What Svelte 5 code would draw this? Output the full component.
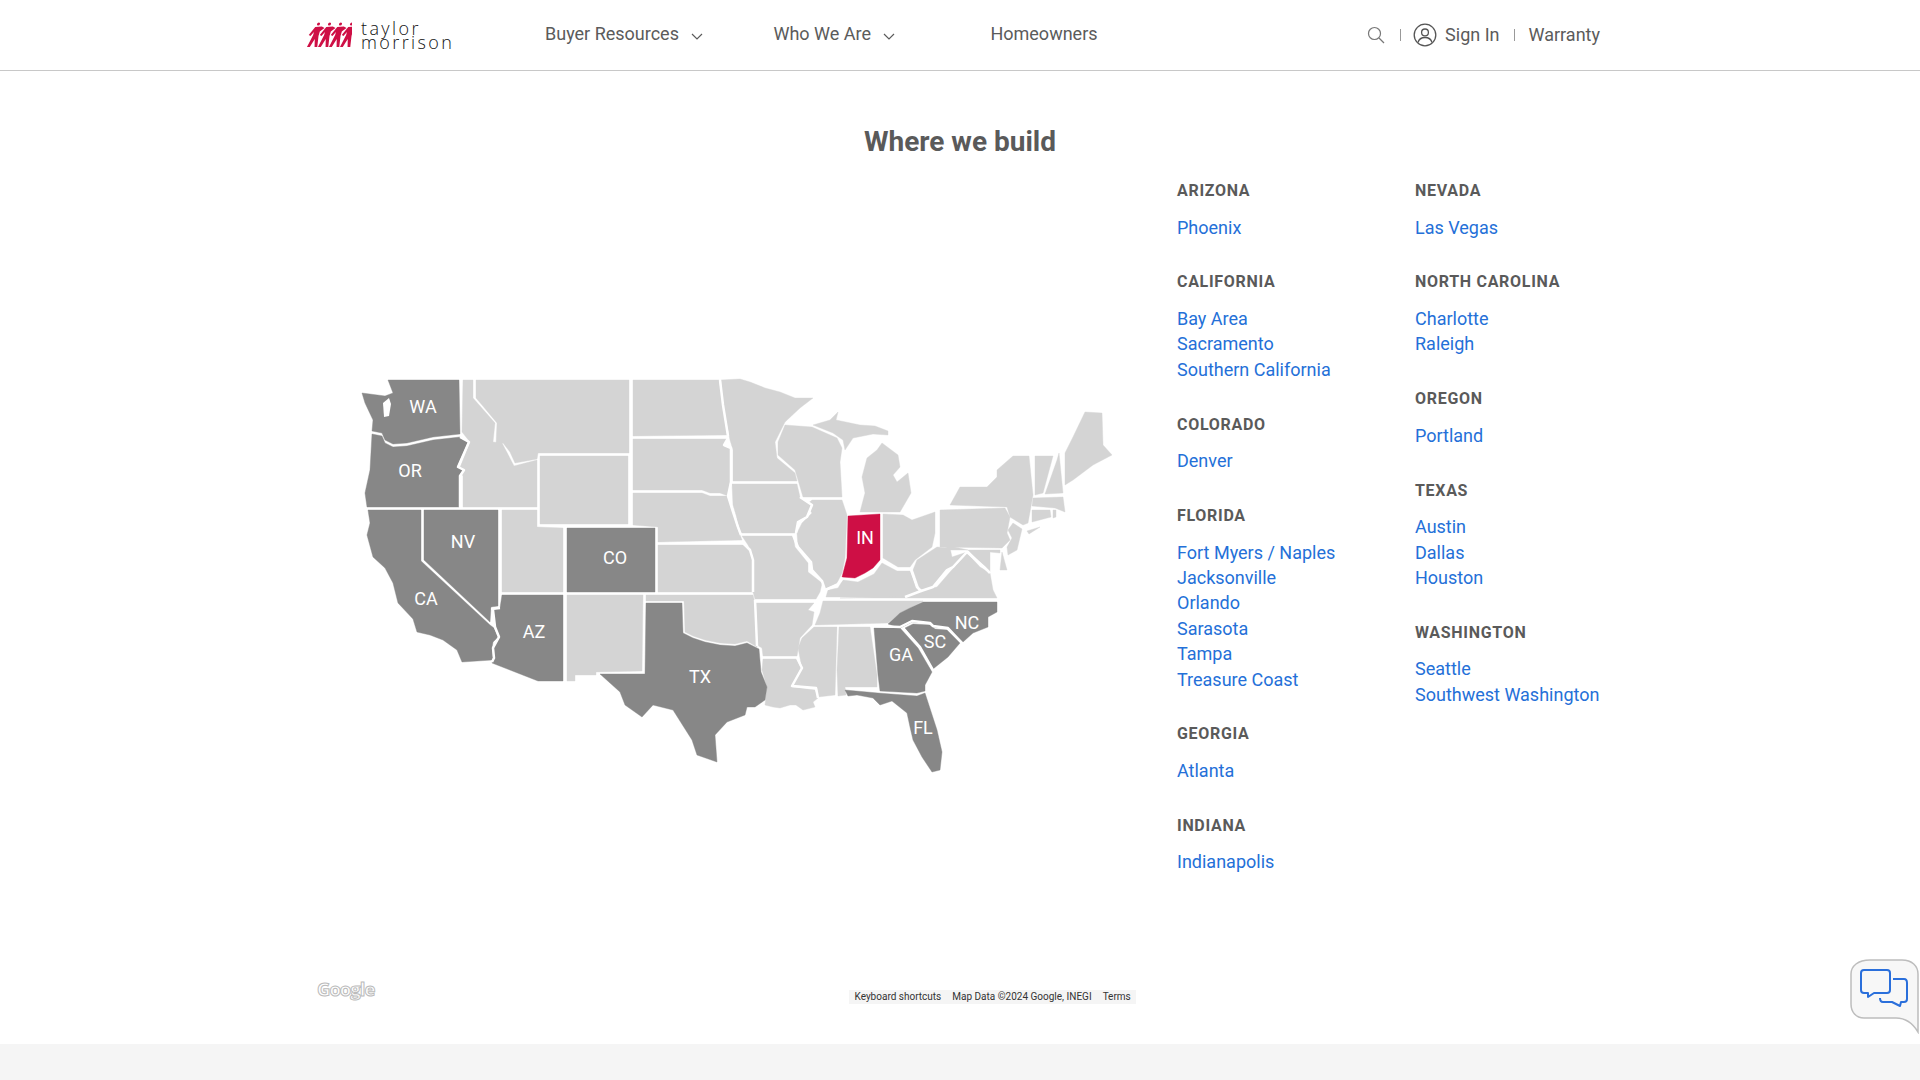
<script>
  const DARK = '#878787'
  const LIGHT = '#d4d4d4'
  const RED = '#ce0f45'

  const states = [
    ['MT', '476,380 629,380 629,453 538,453 537,459 515,463 510,452 503,443 496,445 497,423 482,405 476,398'],
    ['ID', '463,380 473,380 473,398 495,423 493,442 502,443 514,466 537,460 537,507 463,507 463,476 459,470 470,442 462,432'],
    ['ND', '633,380 719,380 723,405 727,435 633,436'],
    ['SD', '633,439 727,439 724,445 730,448 730,482 728,496 720,493 710,493 702,490 633,490'],
    ['NE', '633,493 702,493 710,496 727,496 733,512 737,527 742,540 658,542 658,527 633,525'],
    ['WY', '540,456 628,456 628,524 540,524'],
    ['UT', '502,510 537,510 537,527 563,528 563,592 502,592'],
    ['KS', '658,545 743,545 750,550 753,560 753,592 658,592'],
    ['NM', '567,595 643,595 642,671 596,672 596,675 575,675 575,681 567,681'],
    ['OK', '646,595 753,595 755,603 757,647 747,641 735,644 720,643 705,640 693,636 685,632 684,601 646,601'],
    ['MN', '721,380 740,379 750,382 765,388 780,392 795,398 813,398 800,408 785,422 775,442 777,458 795,473 797,481 733,481 733,450 730,440 725,415 722,395'],
    ['IA', '732,484 797,484 800,497 812,505 807,517 798,522 795,533 740,533 736,515 733,505'],
    ['MO', '742,536 793,536 795,547 808,563 808,572 822,583 820,592 816,599 755,599 753,592 753,557 748,545'],
    ['AR', '756,603 814,603 808,610 814,612 812,625 800,638 797,656 763,656 762,648 757,645'],
    ['LA', '763,659 797,659 801,668 791,687 815,690 818,698 813,702 815,707 803,710 796,705 790,705 780,708 773,707 765,705 767,687 762,670'],
    ['IL', '812,500 842,500 847,515 845,558 842,573 837,583 825,589 822,580 812,570 811,562 798,547 797,533 802,523 812,513 806,505'],
    ['WI', '785,425 812,427 837,438 842,448 840,462 842,497 803,497 798,480 795,470 778,455 778,442'],
    ['MIU', '813,425 830,420 838,412 836,420 860,425 875,426 888,431 888,435 873,434 853,438 845,450 843,440 833,433'],
    ['MI', '882,443 898,455 900,467 893,475 897,482 908,473 911,493 900,512 860,512 865,493 862,477 867,458 877,450'],
    ['OH', '883,514 903,515 912,520 935,512 935,533 932,547 915,560 910,567 898,567 883,558'],
    ['KY', '826,597 828,590 838,588 843,580 858,582 874,574 882,563 897,571 910,571 916,586 921,590 905,597'],
    ['TN', '823,601 923,601 910,608 900,613 888,623 815,625 820,613'],
    ['WV', '913,570 917,560 937,547 950,548 952,557 967,552 953,567 947,570 933,587 920,590'],
    ['VA', '840,598 907,596 922,590 937,587 950,572 967,553 980,567 990,573 993,590 997,598'],
    ['MS', '814,627 837,627 835,695 818,697 817,688 793,685 802,668 798,648 802,638'],
    ['AL', '839,627 870,627 877,675 877,687 845,687 846,695 838,696 837,670'],
    ['PA', '940,510 1005,508 1010,517 1007,533 1010,540 1002,548 940,547'],
    ['NY', '950,505 960,487 987,487 997,477 997,470 1013,456 1029,456 1033,495 1028,523 1023,525 1010,517 1007,507'],
    ['LI', '1027,531 1040,527 1029,534'],
    ['NJ', '1013,523 1022,529 1017,550 1008,555 1007,547 1012,538 1008,530'],
    ['MD', '940,550 1000,550 1000,553 990,552 990,572 984,566 968,550 950,546'],
    ['DE', '1002,552 1007,570 1000,570'],
    ['VT', '1035,456 1053,456 1043,493 1035,495'],
    ['NH', '1059,453 1063,493 1045,494 1057,460'],
    ['ME', '1065,453 1073,437 1085,412 1102,413 1103,445 1112,455 1093,465 1073,480 1065,485'],
    ['MA', '1033,498 1063,497 1065,512 1055,508 1032,506'],
    ['CT', '1032,510 1050,510 1051,517 1032,522'],
    ['RI', '1053,510 1056,510 1056,517 1053,518'],
  ].map(([id, points]) => ({ id, points, fill: LIGHT }))

  const active = [
    ['WA', '388,380 459,380 460,434 433,437 407,443 393,444 385,440 382,433 372,431 373,420 365,403 362,393 385,396 393,393'],
    ['OR', '372,434 382,436 385,443 393,447 407,446 433,440 460,437 468,442 457,467 463,470 459,476 459,507 367,507 365,493 370,470'],
    ['NV', '424,510 498,510 498,606 491,607 490,622 424,560'],
    ['CA', '368,510 421,510 421,561 490,625 494,628 498,637 493,642 492,648 493,658 492,660 462,662 457,650 443,640 430,635 417,632 413,619 398,603 393,583 385,568 373,557 367,535 370,523'],
    ['CO', '567,528 655,528 655,592 567,592'],
    ['AZ', '502,595 563,595 563,681 538,681 492,663 494,658 493,648 500,637 495,627 493,610 500,608'],
    ['TX', '646,603 682,603 683,633 693,638 705,642 720,645 735,646 747,643 759,649 761,672 767,687 765,700 755,707 747,707 745,715 727,722 715,735 717,762 697,755 692,740 673,710 653,705 642,717 625,705 620,692 600,674 645,674'],
    ['NC', '923,602 997,602 997,612 988,617 988,627 973,633 963,642 948,628 933,627 930,623 912,622 900,628 888,624 900,613 910,608'],
    ['SC', '905,628 913,624 930,625 935,629 947,630 960,643 948,657 933,669 920,647'],
    ['GA', '874,628 900,628 918,648 932,672 925,685 925,691 917,693 880,691 878,675'],
    ['FL', '845,690 878,693 917,696 925,693 937,730 942,752 940,770 932,772 922,757 913,740 910,727 907,713 892,701 880,705 873,698 857,695 848,696'],
  ].map(([id, points]) => ({ id, points, fill: DARK }))

  const indiana = { id: 'IN', points: '848,516 880,514 880,560 873,568 865,573 855,578 842,577 847,558', fill: RED }

  // borders between states whose polygons touch
  const borders = [
    '720,380 723,405 728,436',
    '728,438 724,445 731,448 731,482 728,496 733,512 738,527 741,535',
    '743,543 750,550 753,560 753,592',
    '755,600 756,622 757,646',
    '793,535 798,547 811,562 812,570 822,581 825,590 837,585 843,578',
    '800,497 812,505 807,517 798,522 796,533',
    '911,569 917,587 921,591 905,597',
    '921,591 933,587 947,570 953,567 967,552 984,567 990,573',
    '797,658 802,668 792,686 816,688 818,698',
    '460,437 469,442 458,467 464,470 460,476 460,507',
    '491,609 500,608',
    '493,610 495,627 499,637 493,648 494,658 492,662',
    '874,626 900,627 912,621 930,623 933,626 948,628 962,643',
    '903,628 920,647 933,670',
  ]

  const labels = [
    ['WA', 423, 406], ['OR', 410, 470], ['NV', 463, 541], ['CO', 615, 557],
    ['CA', 426, 598], ['AZ', 534, 631], ['TX', 700, 676], ['IN', 865, 537],
    ['NC', 967, 622], ['SC', 935, 641], ['GA', 901, 654], ['FL', 923, 727],
  ]

  const columns = [
    [
      { name: 'Arizona', cities: ['Phoenix'] },
      { name: 'California', cities: ['Bay Area', 'Sacramento', 'Southern California'] },
      { name: 'Colorado', cities: ['Denver'] },
      { name: 'Florida', cities: ['Fort Myers / Naples', 'Jacksonville', 'Orlando', 'Sarasota', 'Tampa', 'Treasure Coast'] },
      { name: 'Georgia', cities: ['Atlanta'] },
      { name: 'Indiana', cities: ['Indianapolis'] },
    ],
    [
      { name: 'Nevada', cities: ['Las Vegas'] },
      { name: 'North Carolina', cities: ['Charlotte', 'Raleigh'] },
      { name: 'Oregon', cities: ['Portland'] },
      { name: 'Texas', cities: ['Austin', 'Dallas', 'Houston'] },
      { name: 'Washington', cities: ['Seattle', 'Southwest Washington'] },
    ],
  ]
</script>

<header class="header">
  <div class="header-inner">
    <a class="logo" href="#top">
      <svg class="logo-mark" viewBox="0 0 46 26" width="46" height="26" aria-hidden="true">
        {#each [0, 11, 22, 33] as dx}
          <g transform="translate({dx} 0) skewX(-14) translate(6 0)" fill={RED}>
            <circle cx="7" cy="2" r="1.5" />
            <path d="M0 13 L4.500 5 L11 4.600 L14 6 L10.200 9.500 L10 14 L11.500 25 L8.800 25 L7 17 L4 25 L1.200 25 L4.400 13 L4.400 10 L2 14 Z" />
          </g>
        {/each}
      </svg>
      <span class="logo-text">taylor morrison</span>
    </a>
    <nav class="nav">
      <a class="nav-link buyer" href="#top">Buyer Resources
        <svg class="chev" viewBox="0 0 12 7" width="12" height="7"><path d="M1 1l5 5 5-5" /></svg>
      </a>
      <a class="nav-link who" href="#top">Who We Are
        <svg class="chev" viewBox="0 0 12 7" width="12" height="7"><path d="M1 1l5 5 5-5" /></svg>
      </a>
      <a class="nav-link" href="#top">Homeowners</a>
    </nav>
    <div class="tools">
      <svg class="search" viewBox="0 0 18 18" width="18" height="18">
        <circle cx="7.5" cy="7.5" r="6" /><path d="M12 12l5 5" />
      </svg>
      <span class="sep first"></span>
      <svg class="user" viewBox="0 0 24 24" width="24" height="24">
        <circle cx="12" cy="12" r="10.8" /><circle cx="12" cy="9.4" r="3.4" />
        <path d="M5 19.5c1-3.6 3.4-5 7-5s6 1.400 7 5" />
      </svg>
      <a class="nav-link" href="#top">Sign In</a>
      <span class="sep"></span>
      <a class="nav-link" href="#top">Warranty</a>
    </div>
  </div>
</header>

<main class="main">
  <h1 class="title">Where we build</h1>
  <div class="row">
    <div class="map">
      <svg viewBox="300 170 850 850" width="850" height="850">
        {#each [...states, ...active, indiana] as s (s.id)}
          <polygon points={s.points} fill={s.fill} stroke={s.fill} stroke-width="0.4" stroke-linejoin="round" />
        {/each}
        {#each borders as b}
          <polyline points={b} fill="none" stroke="#fff" stroke-width="2.5" stroke-linejoin="round" />
        {/each}
        <path d="M383 403 L389 398 L391 404 L389 416 L384 417 Z" fill="#fff" />
        {#each labels as [text, x, y]}
          <text {x} {y} text-anchor="middle" dominant-baseline="central">{text}</text>
        {/each}
      </svg>
      <span class="google">Google</span>
      <div class="attribution">
        <span>Keyboard shortcuts</span>
        <span>Map Data ©2024 Google, INEGI</span>
        <span>Terms</span>
      </div>
    </div>
    <div class="lists">
      {#each columns as col}
        <div class="col">
          {#each col as group}
            <section class="group">
              <h2>{group.name}</h2>
              {#each group.cities as city}
                <a href="#top">{city}</a>
              {/each}
            </section>
          {/each}
        </div>
      {/each}
    </div>
  </div>
</main>

<div class="footer-band"></div>

<button class="chat" aria-label="Chat">
  <svg viewBox="0 0 70 76" width="70" height="76">
    <path class="bubble" d="M20 2 H52 C62 2 68 8 68 16 V74 C62 64 54 60 46 60 H14 C6 60 1 54 1 46 V16 C1 8 8 2 20 2 Z" />
    <path class="ico" d="M43 21 H54 Q57 21 57 25 V41 Q57 44 54 44 H51 L50 48 L42 44 H33 Q30 44 30 40" />
    <path class="ico" d="M14 12 H37 Q40 12 40 15 V32 Q40 35 37 35 H24 L18 39 L18 35 H14 Q11 35 11 32 V15 Q11 12 14 12 Z" />
  </svg>
</button>

<style>
  :global(body) {
    font-family: Roboto, sans-serif;
    background: #fff;
    color: #5a5a5a;
  }
  a { text-decoration: none; color: inherit; }

  .header {
    height: 70px;
    border-bottom: 1px solid #c8c8c8;
  }
  .header-inner {
    width: 1300px;
    margin-left: 300px;
    height: 100%;
    display: flex;
    align-items: center;
  }
  .logo {
    display: flex;
    align-items: center;
    gap: 9px;
    width: 245px;
  }
  .logo-mark { display: block; margin-left: 6px; }
  .logo-text {
    width: 98px;
    font-family: "Open Sans", sans-serif;
    font-weight: 300;
    font-size: 18px;
    line-height: 14px;
    letter-spacing: 2.4px;
    color: #111;
  }
  .nav {
    display: flex;
    align-items: center;
    padding-bottom: 3px;
  }
  .nav-link {
    font-size: 18px;
    color: #5b5b5b;
    white-space: nowrap;
  }
  .chev {
    fill: none;
    stroke: #5b5b5b;
    stroke-width: 1.2;
    margin-left: 8px;
  }
  .buyer { margin-right: 70px; }
  .who { margin-right: 95px; }
  .tools {
    margin-left: auto;
    display: flex;
    align-items: center;
    padding-bottom: 1px;
  }
  .search { fill: none; stroke: #777; stroke-width: 1.2; }
  .user { fill: none; stroke: #555; stroke-width: 1.3; margin-right: 8px; }
  .sep {
    width: 1px;
    height: 12px;
    background: #999;
    margin: 0 14px;
  }
  .sep.first { margin: 0 12px 0 15px; }

  .main { height: 973px; }
  .title {
    margin: 0;
    padding-top: 53px;
    height: 46px;
    line-height: 36px;
    text-align: center;
    font-size: 28px;
    font-weight: 700;
    color: #5a5a5a;
  }
  .row {
    display: flex;
    margin-left: 300px;
  }
  .map {
    position: relative;
    width: 850px;
    height: 850px;
  }
  .map svg { display: block; }
  .map text {
    font-family: Roboto, sans-serif;
    font-size: 18px;
    font-weight: 400;
    fill: #fff;
  }
  .google {
    position: absolute;
    left: 17px;
    top: 806px;
    font-family: "Open Sans", sans-serif;
    font-size: 18.5px;
    font-weight: 700;
    letter-spacing: -1px;
    color: #fff;
    -webkit-text-stroke: 1px #bbb;
  }
  .attribution {
    position: absolute;
    left: 549px;
    top: 820px;
    display: flex;
    font-size: 10px;
    line-height: 14px;
    color: #333;
  }
  .attribution span {
    background: #f5f5f5;
    padding: 0 5.5px;
  }
  .lists {
    display: flex;
    margin-left: 27px;
    padding-top: 11px;
  }
  .col { width: 238px; }
  .group {
    margin-bottom: 32.5px;
  }
  .group h2 {
    margin: 0 0 13.5px;
    font-size: 16px;
    line-height: 20px;
    font-weight: 700;
    letter-spacing: 0.7px;
    text-transform: uppercase;
    color: #5a5a5a;
  }
  .group a {
    display: block;
    font-size: 18px;
    line-height: 25.4px;
    color: #2470d8;
  }
  .footer-band {
    height: 36px;
    background: #f5f5f5;
  }
  .chat {
    position: fixed;
    right: 0;
    top: 958px;
    width: 70px;
    height: 76px;
    padding: 0;
    border: none;
    background: none;
  }
  .chat svg { display: block; }
  .bubble { fill: #f7f7f7; stroke: #bdbdbd; stroke-width: 1.5; }
  .ico { fill: none; stroke: #2a6fdb; stroke-width: 2; stroke-linejoin: round; }
</style>
